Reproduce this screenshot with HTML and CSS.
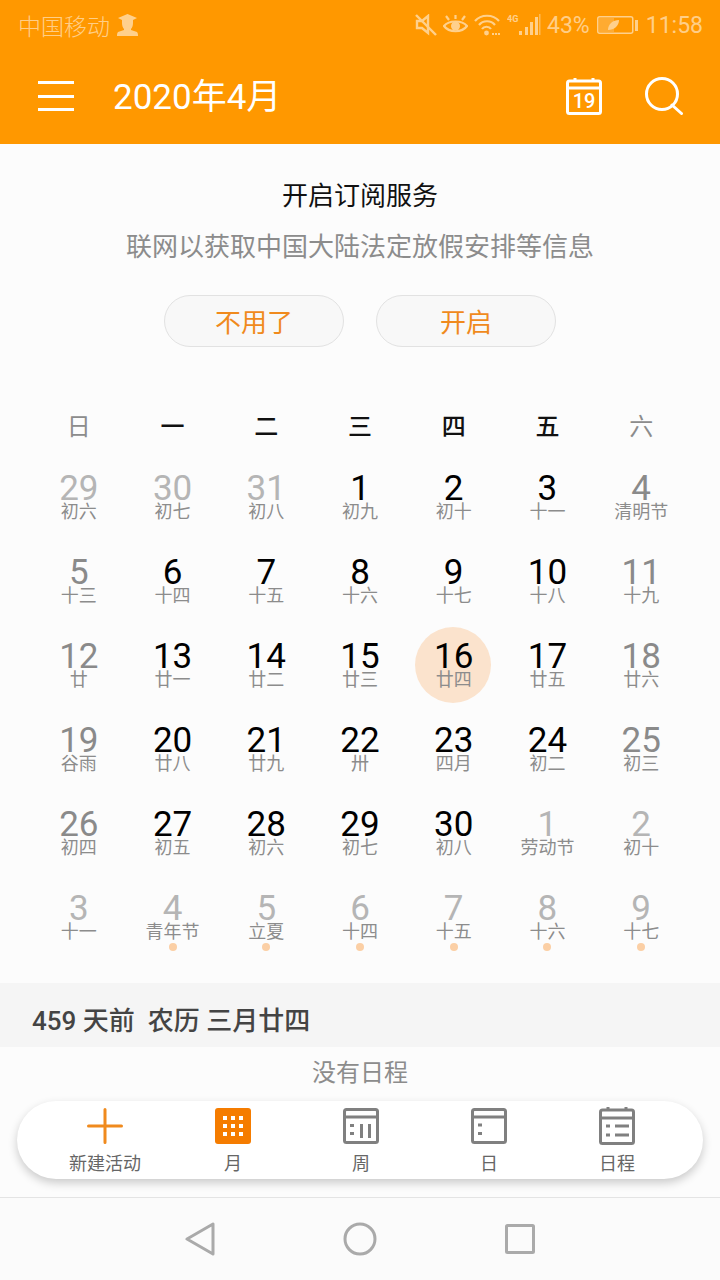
FILE: index.html
```html
<!DOCTYPE html>
<html lang="zh-CN">
<head>
<meta charset="utf-8">
<title>日历</title>
<link rel="stylesheet" href="styles.css">
</head>
<body>
<div class="app">
  <header class="top">
    <div class="status">
      <span class="carrier">中国移动</span>
      <svg class="ic-person" viewBox="0 0 21 22" width="21" height="22"><path d="M10.500 0 20 4 16 6V9C16 12 15 14 14 15V16L20 18C21 19 21 21 21 22H0C0 21 0 19 1 18L7 16V15C6 14 5 12 5 9V6L1 4Z" fill="#fff"/></svg>
      <span class="status-right">
        <svg viewBox="0 0 22 22" width="22" height="22" fill="none" stroke="#fff" stroke-width="2.400"><path d="M2 7V14H7L13 19V2L7 7Z"/><path d="M1 1 21 21"/></svg>
        <svg class="gap-s" viewBox="0 0 25 20" width="25" height="20" fill="none" stroke="#fff" stroke-width="2.200"><path d="M1 11C6 5 19 5 24 11 19 18 6 18 1 11Z"/><circle cx="12.500" cy="11" r="4.500" fill="#fff" stroke="none"/><path d="M3 1 6 5M22 1 19 5M12.500 0V4"/></svg>
        <svg class="gap-s" viewBox="0 0 27 22" width="27" height="22" fill="none" stroke="#fff" stroke-width="2.200"><path d="M1 7C7 0 19 0 25 7M5 11C9 6 17 6 21 11M8 15C10 12 15 12 17 15"/><circle cx="12.500" cy="19" r="2.400" fill="#fff" stroke="none"/><path d="M18 20H27" stroke-width="2" stroke-dasharray="2 1"/></svg>
        <svg class="gap-s" viewBox="0 0 34 22" width="34" height="22"><text class="ic-4g" x="0" y="8">4G</text><g fill="#fff"><rect x="12" y="17" width="3" height="4"/><rect x="18" y="13" width="3" height="8"/><rect x="23" y="8" width="3" height="13"/><rect x="28" y="3" width="3" height="18"/><rect x="32" y="0" width="1.500" height="21" opacity=".6"/></g></svg>
        <span class="pct">43%</span>
        <svg class="gap-b" viewBox="0 0 41 18" width="41" height="18" fill="none"><rect x="0.750" y="0.750" width="35" height="16.500" rx="2" stroke="#fff" stroke-width="1.500"/><rect x="2" y="2" width="15" height="14" fill="#fff" opacity=".35"/><path d="M11 14C11 8 16 4 22 4 22 10 17 14 11 14Z" fill="#fff"/><rect x="38" y="4" width="3" height="11" fill="#fff"/></svg>
        <span class="clock">11:58</span>
      </span>
    </div>
    <div class="toolbar">
      <div class="burger"><i></i><i></i><i></i></div>
      <h1 class="month-title">2020年4月</h1>
      <div class="tool-icons">
        <svg viewBox="0 0 36 38" width="36" height="38" fill="none" stroke="#fff" stroke-width="3"><rect x="1.500" y="4" width="33" height="32.500" rx="2"/><path d="M1.500 11H34.500"/><path d="M9 1V5M27 1V5"/><text class="ic-day" x="18" y="31">19</text></svg>
        <svg viewBox="0 0 38 38" width="38" height="38" fill="none" stroke="#fff" stroke-width="3"><circle cx="17" cy="17" r="15.500"/><path d="M27 28 36.500 36.500" stroke-linecap="round"/></svg>
      </div>
    </div>
  </header>

  <main class="content">
    <section class="banner">
      <h2 class="banner-title">开启订阅服务</h2>
      <p class="banner-sub">联网以获取中国大陆法定放假安排等信息</p>
      <div class="banner-actions">
        <button class="pill-btn">不用了</button>
        <button class="pill-btn">开启</button>
      </div>
    </section>

    <section class="calendar">
      <div class="weekdays">
        <span class="wk-end">日</span><span>一</span><span>二</span><span>三</span><span>四</span><span>五</span><span class="wk-end">六</span>
      </div>
      <div class="days">
        <div class="day out"><b>29</b><small>初六</small></div>
        <div class="day out"><b>30</b><small>初七</small></div>
        <div class="day out"><b>31</b><small>初八</small></div>
        <div class="day"><b>1</b><small>初九</small></div>
        <div class="day"><b>2</b><small>初十</small></div>
        <div class="day"><b>3</b><small>十一</small></div>
        <div class="day end"><b>4</b><small>清明节</small></div>

        <div class="day end"><b>5</b><small>十三</small></div>
        <div class="day"><b>6</b><small>十四</small></div>
        <div class="day"><b>7</b><small>十五</small></div>
        <div class="day"><b>8</b><small>十六</small></div>
        <div class="day"><b>9</b><small>十七</small></div>
        <div class="day"><b>10</b><small>十八</small></div>
        <div class="day end"><b>11</b><small>十九</small></div>

        <div class="day end"><b>12</b><small>廿</small></div>
        <div class="day"><b>13</b><small>廿一</small></div>
        <div class="day"><b>14</b><small>廿二</small></div>
        <div class="day"><b>15</b><small>廿三</small></div>
        <div class="day today"><b>16</b><small>廿四</small></div>
        <div class="day"><b>17</b><small>廿五</small></div>
        <div class="day end"><b>18</b><small>廿六</small></div>

        <div class="day end"><b>19</b><small>谷雨</small></div>
        <div class="day"><b>20</b><small>廿八</small></div>
        <div class="day"><b>21</b><small>廿九</small></div>
        <div class="day"><b>22</b><small>卅</small></div>
        <div class="day"><b>23</b><small>四月</small></div>
        <div class="day"><b>24</b><small>初二</small></div>
        <div class="day end"><b>25</b><small>初三</small></div>

        <div class="day end"><b>26</b><small>初四</small></div>
        <div class="day"><b>27</b><small>初五</small></div>
        <div class="day"><b>28</b><small>初六</small></div>
        <div class="day"><b>29</b><small>初七</small></div>
        <div class="day"><b>30</b><small>初八</small></div>
        <div class="day out"><b>1</b><small>劳动节</small></div>
        <div class="day out"><b>2</b><small>初十</small></div>

        <div class="day out"><b>3</b><small>十一</small></div>
        <div class="day out dot"><b>4</b><small>青年节</small></div>
        <div class="day out dot"><b>5</b><small>立夏</small></div>
        <div class="day out dot"><b>6</b><small>十四</small></div>
        <div class="day out dot"><b>7</b><small>十五</small></div>
        <div class="day out dot"><b>8</b><small>十六</small></div>
        <div class="day out dot"><b>9</b><small>十七</small></div>
      </div>
    </section>

    <div class="info-bar">459 天前&nbsp;&nbsp;农历 三月廿四</div>
    <p class="no-events">没有日程</p>

    <nav class="float-bar">
      <div class="tab">
        <svg viewBox="0 0 36 36" width="36" height="36" fill="none" stroke="#f08a1d" stroke-width="3" stroke-linecap="round"><path d="M18 1.500V34.500M1.500 18H34.500"/></svg>
        <span>新建活动</span>
      </div>
      <div class="tab">
        <svg viewBox="0 0 36 36" width="36" height="36"><rect width="36" height="36" rx="3" fill="#f57c00"/><g fill="#fff"><rect x="8" y="8" width="4" height="4"/><rect x="16" y="8" width="4" height="4"/><rect x="24" y="8" width="4" height="4"/><rect x="8" y="16" width="4" height="4"/><rect x="16" y="16" width="4" height="4"/><rect x="24" y="16" width="4" height="4"/><rect x="8" y="24" width="4" height="4"/><rect x="16" y="24" width="4" height="4"/><rect x="24" y="24" width="4" height="4"/></g></svg>
        <span>月</span>
      </div>
      <div class="tab">
        <svg viewBox="0 0 36 36" width="36" height="36" fill="none" stroke="#808080" stroke-width="3"><rect x="1.500" y="1.500" width="33" height="33" rx="2"/><path d="M1.500 9H34.500"/><path d="M7 17.500H11M7 25.500H11"/><path d="M18.500 16V30M26.500 16V30"/></svg>
        <span>周</span>
      </div>
      <div class="tab">
        <svg viewBox="0 0 36 36" width="36" height="36" fill="none" stroke="#808080" stroke-width="3"><rect x="1.500" y="1.500" width="33" height="33" rx="2"/><path d="M1.500 9H34.500"/><path d="M7 17H11M7 25.500H11"/></svg>
        <span>日</span>
      </div>
      <div class="tab">
        <svg viewBox="0 0 36 38" width="36" height="38" class="ic-agenda" fill="none" stroke="#808080" stroke-width="3"><rect x="1.500" y="3" width="33" height="33.500" rx="2"/><path d="M1.500 11H34.500M9 0V4M27 0V4"/><path d="M7 19H11M7 28H11M16 19H30M16 28H30"/></svg>
        <span>日程</span>
      </div>
    </nav>
  </main>

  <footer class="sys-nav">
    <svg viewBox="0 0 30 34" width="30" height="34" fill="none" stroke="#aaa" stroke-width="3" stroke-linejoin="round"><path d="M2 17 28 2V32Z"/></svg>
    <svg viewBox="0 0 34 34" width="34" height="34" fill="none" stroke="#aaa" stroke-width="3"><circle cx="17" cy="17" r="15"/></svg>
    <svg viewBox="0 0 30 30" width="30" height="30" fill="none" stroke="#aaa" stroke-width="3" stroke-linejoin="round"><rect x="1.500" y="1.500" width="27" height="27" rx="1"/></svg>
  </footer>
</div>
</body>
</html>
```

FILE: styles.css
```css
* { box-sizing: border-box; margin: 0; padding: 0; }

html, body { width: 720px; height: 1280px; overflow: hidden; }

body {
  font-family: Roboto, "Noto Sans CJK SC", "Noto Sans", sans-serif;
  background: #fcfcfc;
  color: #000;
}

.app { display: flex; flex-direction: column; height: 1280px; }

/* header */
.top { background: #ff9800; color: #fff; height: 144px; flex: none; }

.status {
  height: 48px;
  display: flex;
  align-items: center;
  padding: 2px 17px 0 18px;
  color: rgba(255, 255, 255, .55);
  font-size: 23px;
}

.status svg { opacity: .55; flex: none; }
.ic-person { margin-left: 7px; }
.carrier { font-weight: 300; }
.status-right { margin-left: auto; display: flex; align-items: center; }
.gap-s { margin-left: 6px; }
.gap-b { margin-left: 7px; }
.pct { margin-left: 6px; }
.clock { margin-left: 8px; }
.ic-4g { font-size: 9px; font-weight: 700; fill: #fff; }

.toolbar { height: 96px; display: flex; align-items: center; padding: 0 37px 0 38px; }

.burger { width: 36px; height: 30px; display: flex; flex-direction: column; justify-content: space-between; }
.burger i { display: block; height: 3px; background: #fff; }

.month-title { margin: 4px 0 0 39px; font-size: 35px; font-weight: 400; line-height: 40px; }

.tool-icons { margin-left: auto; display: flex; align-items: center; gap: 43px; }
.ic-day { font-size: 20px; font-weight: 500; fill: #fff; stroke: none; text-anchor: middle; }

/* banner */
.content { position: relative; flex: 1; min-height: 0; }

.banner { padding-top: 34px; text-align: center; }
.banner-title { font-size: 26px; font-weight: 400; line-height: 36px; color: #111; }
.banner-sub { margin-top: 15px; font-size: 26px; line-height: 36px; color: #8c8c8c; }

.banner-actions { margin-top: 30px; display: flex; justify-content: center; gap: 32px; }

.pill-btn {
  width: 180px;
  height: 52px;
  padding-bottom: 2px;
  border: 1.500px solid #e2e2e2;
  border-radius: 26px;
  background: #f8f8f8;
  color: #f08a1d;
  font: inherit;
  font-size: 26px;
}

/* calendar */
.calendar { padding: 57px 32px 24px; }

.weekdays { display: grid; grid-template-columns: repeat(7, 1fr); height: 40px; align-items: center; text-align: center; font-size: 24px; font-weight: 500; color: #111; }
.wk-end { color: #8c8c8c; font-weight: 400; }

.days { margin-top: 11px; display: grid; grid-template-columns: repeat(7, 1fr); grid-auto-rows: 84px; }

.day { position: relative; display: flex; flex-direction: column; align-items: center; justify-content: center; }
.day b { position: relative; top: 1px; font-size: 35px; font-weight: 400; line-height: 30px; color: #000; }
.day small { position: relative; font-size: 18px; line-height: 18px; color: #8c8c8c; }

.day.end b { color: #8a8a8a; }
.day.out b { color: #b5b5b5; }

.today::before {
  content: "";
  position: absolute;
  left: 50%;
  top: 50%;
  width: 76px;
  height: 76px;
  margin: -38px 0 0 -39px;
  border-radius: 50%;
  background: #fbe3cd;
}

.dot::after {
  content: "";
  position: absolute;
  left: 50%;
  top: 68px;
  width: 8px;
  height: 8px;
  margin-left: -4px;
  border-radius: 50%;
  background: #fbcfa5;
}

/* info */
.info-bar { height: 64px; padding: 21px 0 0 32px; background: #f5f5f5; font-size: 26px; font-weight: 500; line-height: 34px; color: #444; overflow: hidden; }
.no-events { margin-top: 9px; text-align: center; font-size: 24px; line-height: 34px; color: #8c8c8c; }

/* floating tab bar */
.float-bar {
  position: absolute;
  left: 17px;
  top: 957px;
  width: 686px;
  height: 78px;
  padding: 7px 23px 0 24px;
  display: grid;
  grid-template-columns: repeat(5, 128px);
  background: #fff;
  border-radius: 39px;
  box-shadow: 0 4px 10px rgba(0, 0, 0, .2);
}

.tab { display: flex; flex-direction: column; align-items: center; font-size: 18px; line-height: 24px; color: #666; }
.tab svg { height: 36px; }
.tab span { margin-top: 8px; }
.tab .ic-agenda { height: 38px; margin-top: -1px; }
.tab .ic-agenda + span { margin-top: 7px; }

/* system nav */
.sys-nav {
  height: 83px;
  flex: none;
  padding-bottom: 1px;
  border-top: 1.500px solid #e4e4e4;
  display: flex;
  align-items: center;
  justify-content: center;
  gap: 128px;
  background: #fbfbfb;
}
```
